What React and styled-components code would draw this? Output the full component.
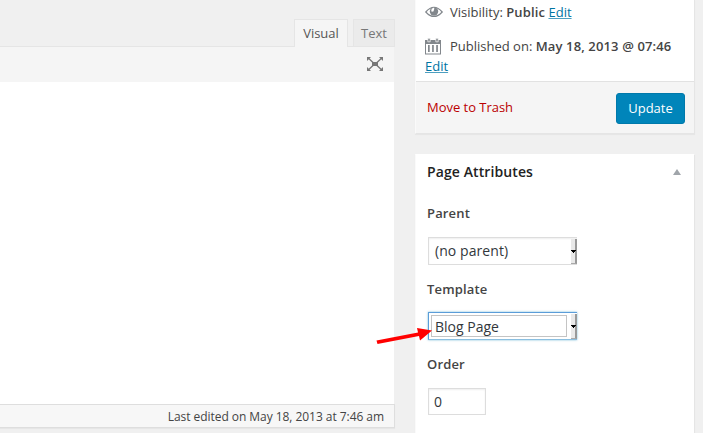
import React from 'react';
import styled, { createGlobalStyle } from 'styled-components';

const GlobalStyle = createGlobalStyle`
  * { box-sizing: border-box; }
  body {
    margin: 0;
    background: #f0f0f0;
    overflow: hidden;
    font: 13px/20px "Open Sans", sans-serif;
    color: #444;
  }
`;

const Page = styled.div`
  position: relative;
  display: grid;
  grid-template-columns: 395px 280px;
  column-gap: 20px;
  width: 703px;
  height: 433px;
  overflow: hidden;
`;

const EditorColumn = styled.main`
  display: flex;
  flex-direction: column;
`;

const Tabs = styled.div`
  display: flex;
  justify-content: flex-end;
  align-items: flex-end;
  gap: 5px;
  height: 47px;
  flex: none;
  border-bottom: 1px solid #e5e5e5;
`;

const Tab = styled.div`
  width: ${(p) => (p.$active ? 54 : 42)}px;
  height: ${(p) => (p.$active ? 28 : 27)}px;
  margin-bottom: ${(p) => (p.$active ? -1 : 0)}px;
  padding-top: 3px;
  border: 1px solid #e5e5e5;
  border-bottom: 0;
  background: ${(p) => (p.$active ? '#f5f5f5' : '#ebebeb')};
  color: ${(p) => (p.$active ? '#555' : '#777')};
  text-align: center;
`;

const Toolbar = styled.div`
  display: flex;
  justify-content: flex-end;
  flex: none;
  width: 394px;
  height: 35px;
  padding: 10px 11px 0 0;
  background: #f5f5f5;
`;

const Canvas = styled.div`
  flex: none;
  width: 394px;
  height: 322px;
  background: #fff;
`;

const StatusBar = styled.div`
  flex: none;
  height: 24px;
  padding: 2px 10px 0 0;
  border: 1px solid #dedede;
  border-left: 0;
  background: #f7f7f7;
  box-shadow: 0 1px 1px rgba(0, 0, 0, 0.04);
  font-size: 12px;
  letter-spacing: -0.05px;
  text-align: right;
`;

const Sidebar = styled.aside`
  display: flex;
  flex-direction: column;
  gap: 20px;
`;

const Panel = styled.section`
  flex: none;
  height: ${(p) => p.$height}px;
  border: 1px solid #e5e5e5;
  border-top-color: ${(p) => (p.$open ? '#fff' : '#e5e5e5')};
  border-left-color: #fafafa;
  background: #fff;
  box-shadow: 0 1px 1px rgba(0, 0, 0, 0.04);
`;

const PublishPanel = styled(Panel)`
  border-top: 0;
`;

const PublishInfo = styled.div`
  height: 82px;
  padding: 2px 0 0 9px;
  border-bottom: 1px solid #e2e2e2;
`;

const InfoLine = styled.div`
  display: flex;
  align-items: center;
  height: 20px;
  margin-bottom: ${(p) => p.$gap || 0}px;
  white-space: pre;
`;

const Strong = styled.b`
  font-weight: 600;
  letter-spacing: 0.13px;
`;

const IconSlot = styled.span`
  display: flex;
  width: 25px;
  flex: none;
`;

const Link = styled.a`
  color: #0074a2;
  text-decoration: underline;
  text-decoration-color: #4d9fc0;
  text-decoration-thickness: 1px;
  text-underline-offset: 1px;
`;

const PublishActions = styled.div`
  display: flex;
  align-items: center;
  justify-content: space-between;
  height: 51px;
  padding: 1px 10px 0 11px;
  background: #f5f5f5;
`;

const Trash = styled.a`
  margin-top: -2px;
  color: #b00;
  letter-spacing: -0.03px;
`;

const UpdateButton = styled.button`
  width: 69px;
  height: 31px;
  margin-right: -1px;
  padding: 0 0 1px;
  border: 1px solid #0079ab;
  border-radius: 3px;
  background: #0085ba;
  color: #fff;
  font: 13px "Open Sans", sans-serif;
`;

const PanelHeader = styled.h2`
  display: flex;
  align-items: center;
  justify-content: space-between;
  height: 34px;
  margin: 0;
  padding: 0 13px 0 11px;
  color: #222;
  font-size: 14px;
  font-weight: 600;
  letter-spacing: 0.1px;
  svg { margin-top: -1px; }
`;

const Fields = styled.div`
  display: flex;
  flex-direction: column;
  align-items: flex-start;
  padding: 14px 12px 0 11px;
`;

const Label = styled.label`
  height: 20px;
  margin-bottom: ${(p) => p.$gap}px;
  font-weight: 600;
  letter-spacing: 0.15px;
`;

const SelectBox = styled.div`
  display: flex;
  width: 149px;
  height: 28px;
  margin: 0 0 ${(p) => p.$after}px 1px;
  border: 1px solid ${(p) => (p.$focused ? '#5b9dd9' : '#ddd')};
  border-right: 0;
  border-bottom-color: ${(p) => (p.$focused ? '#8bbfe0' : '#ddd')};
  background: #fff;
  box-shadow: ${(p) => (p.$focused ? '0 0 2px rgba(30, 140, 190, 0.6)' : 'inset 0 1px 2px rgba(0, 0, 0, 0.07)')};
  color: #32373c;
  font-size: 14px;
  letter-spacing: ${(p) => (p.$focused ? 0 : 0.07)}px;
`;

const SelectValue = styled.span`
  flex: 1;
  margin: 2px 4px 2px 2px;
  padding-left: 3px;
  border: 1px ${(p) => (p.$focused ? 'solid #c4c4c4' : 'solid transparent')};
  line-height: ${(p) => (p.$focused ? 21 : 20)}px;
`;

const SelectArrow = styled.span`
  display: flex;
  align-items: center;
  width: 6px;
  margin-top: 1px;
  background: #e9e9e9;
  border-right: 2px solid #999;
  border-bottom: 1px solid #aaa;
  svg { flex: none; }
`;

const NumberBox = styled.div`
  width: 58px;
  height: 27px;
  margin-left: 1px;
  padding: 3px 5px;
  border: 1px solid #ddd;
  box-shadow: inset 0 1px 2px rgba(0, 0, 0, 0.07);
  color: #32373c;
  font-size: 14px;
`;

const Pointer = styled.svg`
  position: absolute;
  left: 374px;
  top: 322px;
`;

const ExpandIcon = () => (
  <svg width="16" height="14" viewBox="0 0 16 14" fill="#777">
    <path d="M5 5h6v4H5z" />
    <path d="M0 0h4L0 4zM16 0h-4l4 4zM0 14h4l-4-4zM16 14h-4l4-4z" />
    <path d="M1.500 1.300L6 5.500M14.500 1.300L10 5.500M1.500 12.700L6 8.500M14.500 12.700L10 8.500" stroke="#777" strokeWidth="1.300" />
  </svg>
);

const EyeIcon = () => (
  <svg width="18" height="12" viewBox="0 0 18 12">
    <path d="M.8 6Q9-3.500 17.200 6 9 15 .8 6z" fill="#fff" stroke="#82878c" strokeWidth="1.200" />
    <circle cx="9" cy="5.500" r="4.200" fill="#82878c" />
    <path d="M9 1.800a3 3 0 0 0-2.700 3c0 1.200 2.200 1.200 2.400 0C8.800 4 9.800 2.700 9 1.800z" fill="#fff" />
  </svg>
);

const CalendarIcon = () => (
  <svg width="16" height="17" viewBox="0 0 16 17">
    <path d="M0 2h16v14.500H0z" fill="#82878c" />
    <path d="M1 6h14v9.500H1z" fill="#fff" />
    <path d="M2.800.3h2.400v3.500H2.800zM10.800.3h2.400v3.500h-2.400z" fill="#82878c" stroke="#fff" strokeWidth=".7" />
    <path d="M3 7h1.700v7H3zM7.100 7h1.700v7H7.100zM11.200 7h1.700v7h-1.700z" fill="#82878c" />
  </svg>
);

const Caret = () => (
  <svg width="5" height="3" viewBox="0 0 5 3" shapeRendering="crispEdges">
    <path d="M0 0h5v1H0zM1 1h3v1H1zM2 2h1v1H2z" fill="#000" />
  </svg>
);

function Select({ value, focused, after }) {
  return (
    <SelectBox $focused={focused} $after={after}>
      <SelectValue $focused={focused}>{value}</SelectValue>
      <SelectArrow><Caret /></SelectArrow>
    </SelectBox>
  );
}

export default function App() {
  return (
    <Page>
      <GlobalStyle />
      <EditorColumn>
        <Tabs>
          <Tab $active>Visual</Tab>
          <Tab>Text</Tab>
        </Tabs>
        <Toolbar><ExpandIcon /></Toolbar>
        <Canvas />
        <StatusBar>Last edited on May 18, 2013 at 7:46 am</StatusBar>
      </EditorColumn>
      <Sidebar>
        <PublishPanel $height={134}>
          <PublishInfo>
            <InfoLine $gap={14}>
              <IconSlot><EyeIcon /></IconSlot>
              <span>Visibility: <Strong>Public</Strong> <Link>Edit</Link></span>
            </InfoLine>
            <InfoLine>
              <IconSlot><CalendarIcon /></IconSlot>
              <span>Published on: <Strong>May 18, 2013 @ 07:46</Strong></span>
            </InfoLine>
            <InfoLine><Link>Edit</Link></InfoLine>
          </PublishInfo>
          <PublishActions>
            <Trash>Move to Trash</Trash>
            <UpdateButton>Update</UpdateButton>
          </PublishActions>
        </PublishPanel>
        <Panel $height={300} $open>
          <PanelHeader>
            Page Attributes
            <svg width="8" height="6" viewBox="0 0 8 6"><path d="M4 0l4 6H0z" fill="#a0a5aa" /></svg>
          </PanelHeader>
          <Fields>
            <Label $gap={14}>Parent</Label>
            <Select value="(no parent)" after={14} />
            <Label $gap={13}>Template</Label>
            <Select value="Blog Page" focused after={14} />
            <Label $gap={14}>Order</Label>
            <NumberBox>0</NumberBox>
          </Fields>
        </Panel>
      </Sidebar>
      <Pointer width="60" height="24" viewBox="0 0 60 24">
        <path d="M2.500 18.500L44 10.500 43 6 58 8.500 46 18.500 45 14 3.500 22z" fill="#f00" />
      </Pointer>
    </Page>
  );
}
